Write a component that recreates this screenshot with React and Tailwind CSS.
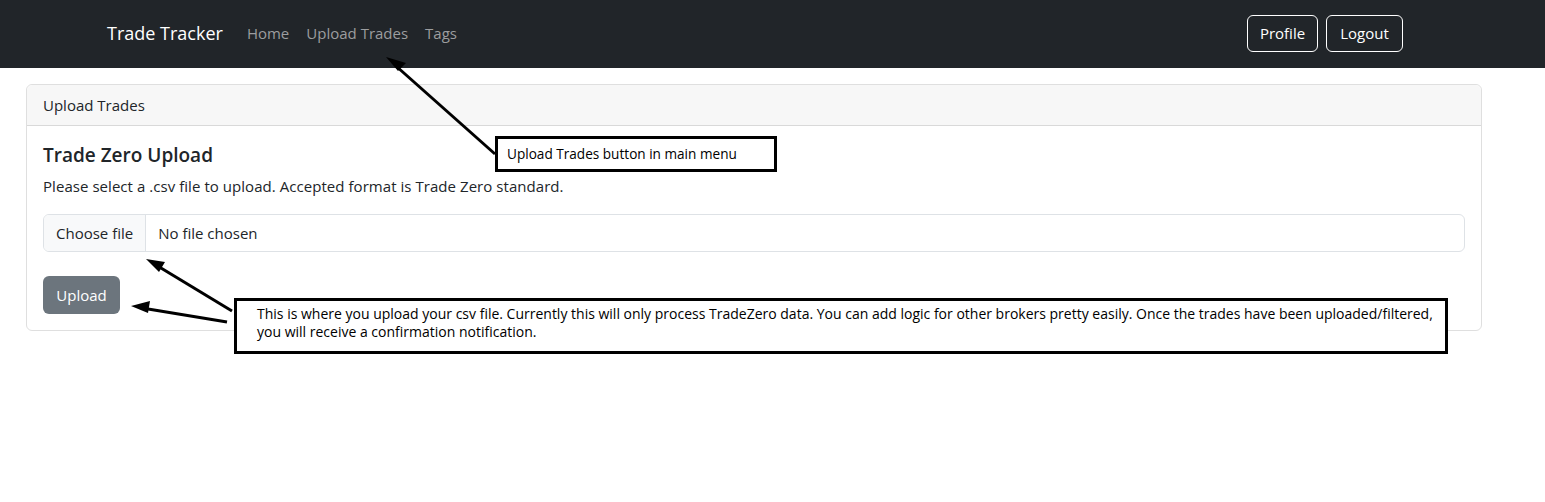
import React from 'react';

const font = { fontFamily: '"Open Sans", "Noto Sans", sans-serif' };

const Navbar = () => (
  <nav className="h-[68px] bg-[#212529] flex items-center">
    <div className="w-[1296px] ml-[107px] flex items-center -mt-[2px]">
      <a className="text-[18px] text-white mr-[24px] leading-none">Trade Tracker</a>
      <div className="flex gap-[17px] text-[15px] text-[#9c9d9f]">
        <a>Home</a>
        <a>Upload Trades</a>
        <a>Tags</a>
      </div>
      <div className="ml-auto flex gap-[8px]">
        <button className="h-[37px] w-[71px] border border-white rounded-[6px] text-white text-[15px]">Profile</button>
        <button className="h-[37px] w-[77px] border border-white rounded-[6px] text-white text-[15px]">Logout</button>
      </div>
    </div>
  </nav>
);

const Arrows = () => (
  <svg className="absolute inset-0 pointer-events-none" width="1545" height="502">
    <g stroke="#000" strokeWidth="3" fill="none">
      <line x1="495" y1="154" x2="396" y2="66" />
      <line x1="232" y1="311" x2="156" y2="265" />
      <line x1="227" y1="322" x2="142" y2="308" />
    </g>
    <g fill="#000">
      <path d="M386,57 L406,63 L398,71 Z" />
      <path d="M146,259 L165,262 L159,272 Z" />
      <path d="M131,306 L150,301 L148,313 Z" />
    </g>
  </svg>
);

export default function App() {
  return (
    <div className="relative w-[1545px] h-[502px] bg-white overflow-hidden text-[#212529]" style={font}>
      <Navbar />
      <div className="px-[26px] pt-[16px] w-[1508px]">
        <div className="border border-[#dfdfdf] rounded-[6px]">
          <div className="h-[41px] bg-[#f7f7f7] border-b border-[#d9d9d9] rounded-t-[6px] px-[16px] flex items-center text-[15px]">Upload Trades</div>
          <div className="p-[16px] pt-[17px]">
            <h5 className="text-[19px] font-semibold leading-[24px] mb-[7px]">Trade Zero Upload</h5>
            <p className="text-[15px] tracking-[0.05px] leading-[24px] mb-[16px]">Please select a .csv file to upload. Accepted format is Trade Zero standard.</p>
            <div className="h-[38px] border border-[#dee2e6] rounded-[6px] flex items-center text-[15px] overflow-hidden">
              <span className="h-full px-[12px] bg-[#f8f9fa] border-r border-[#dee2e6] flex items-center">Choose file</span>
              <span className="px-[12px]">No file chosen</span>
            </div>
            <button className="mt-[24px] h-[38px] w-[77px] bg-[#6c757d] text-white rounded-[6px] text-[15px]">Upload</button>
          </div>
        </div>
      </div>

      <div className="absolute left-[495px] top-[136px] w-[282px] h-[36px] border-[3px] border-black bg-white flex items-center px-[9px] text-[13.6px] text-black">
        Upload Trades button in main menu
      </div>
      <div className="absolute left-[234px] top-[298px] w-[1214px] h-[56px] border-[3px] border-black bg-white pl-[20px] pt-[4px] text-[14px] leading-[18px] text-black whitespace-nowrap">
        This is where you upload your csv file. Currently this will only process TradeZero data. You can add logic for other brokers pretty easily. Once the trades have been uploaded/filtered,
        <br />
        you will receive a confirmation notification.
      </div>
      <Arrows />
    </div>
  );
}
